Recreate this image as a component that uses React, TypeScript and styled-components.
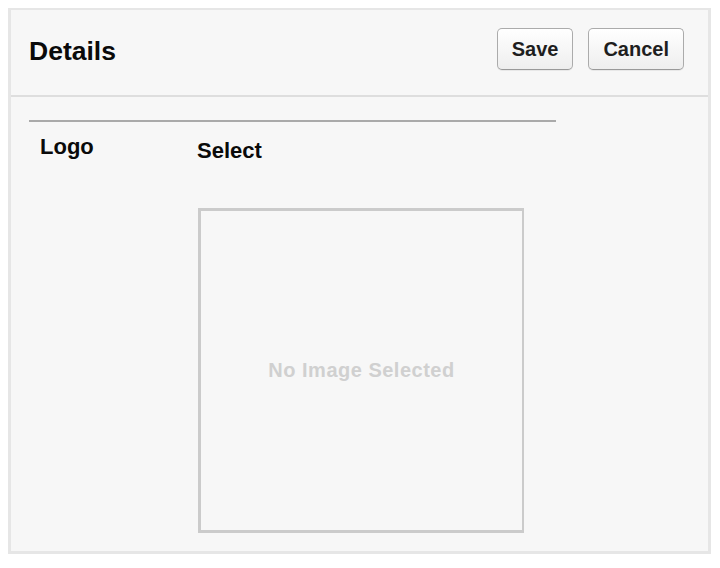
import React from 'react';
import styled, { createGlobalStyle } from 'styled-components';

const GlobalStyle = createGlobalStyle`
  html, body {
    margin: 0;
    padding: 0;
    background: #ffffff;
  }
  body {
    font-family: "Liberation Sans", Arial, Helvetica, sans-serif;
  }
`;

const Page = styled.div`
  padding: 8px;
`;

const Panel = styled.section`
  width: 703px;
  height: 546px;
  box-sizing: border-box;
  background: #f7f7f7;
  border: 3px solid #e6e6e6;
  border-top-width: 2px;
  display: flex;
  flex-direction: column;
`;

const Header = styled.header`
  height: 87px;
  box-sizing: border-box;
  padding: 18px 24px 0 18px;
  border-bottom: 2px solid #dedede;
  display: flex;
  align-items: flex-start;
  justify-content: space-between;
`;

const Title = styled.h1`
  margin: 10px 0 0;
  font-size: 26.5px;
  line-height: 26px;
  font-weight: 700;
  color: #0a0a0a;
`;

const Actions = styled.div`
  display: flex;
  gap: 15px;
`;

const Button = styled.button`
  height: 42px;
  box-sizing: border-box;
  padding: 0 14px;
  font-family: "Liberation Sans", Arial, sans-serif;
  font-size: 20px;
  line-height: 20px;
  font-weight: 700;
  color: #1e1e1e;
  background: linear-gradient(#ffffff, #eeeeee);
  border: 1px solid #ababab;
  border-bottom-color: #999999;
  border-radius: 5px;
  box-shadow: 0 1px 0 rgba(0, 0, 0, 0.06);
  cursor: pointer;
`;

const Body = styled.div`
  padding: 23px 0 0 18px;
`;

const Rule = styled.hr`
  width: 527px;
  height: 2px;
  margin: 0;
  border: none;
  background: #aaaaaa;
`;

const FormRow = styled.div`
  display: grid;
  grid-template-columns: 157px 1fr;
  padding-left: 11px;
`;

const Label = styled.div`
  margin-top: 14px;
  font-size: 22px;
  line-height: 22px;
  font-weight: 700;
  color: #0a0a0a;
`;

const Field = styled.div`
  display: flex;
  flex-direction: column;
  align-items: flex-start;
`;

const SelectLink = styled.div`
  margin-top: 18px;
  font-size: 22px;
  line-height: 22px;
  font-weight: 700;
  color: #0a0a0a;
  cursor: pointer;
`;

const ImageBox = styled.div`
  width: 326px;
  height: 325px;
  box-sizing: border-box;
  margin: 46px 0 0 1px;
  border: 3px solid #cbcbcb;
  border-right-width: 2px;
  display: flex;
  align-items: center;
  justify-content: center;
`;

const Placeholder = styled.span`
  font-size: 20px;
  font-weight: 700;
  letter-spacing: 0.5px;
  color: #d0d0d0;
`;

export default function App() {
  return (
    <Page>
      <GlobalStyle />
      <Panel>
        <Header>
          <Title>Details</Title>
          <Actions>
            <Button>Save</Button>
            <Button>Cancel</Button>
          </Actions>
        </Header>
        <Body>
          <Rule />
          <FormRow>
            <Label>Logo</Label>
            <Field>
              <SelectLink>Select</SelectLink>
              <ImageBox>
                <Placeholder>No Image Selected</Placeholder>
              </ImageBox>
            </Field>
          </FormRow>
        </Body>
      </Panel>
    </Page>
  );
}
